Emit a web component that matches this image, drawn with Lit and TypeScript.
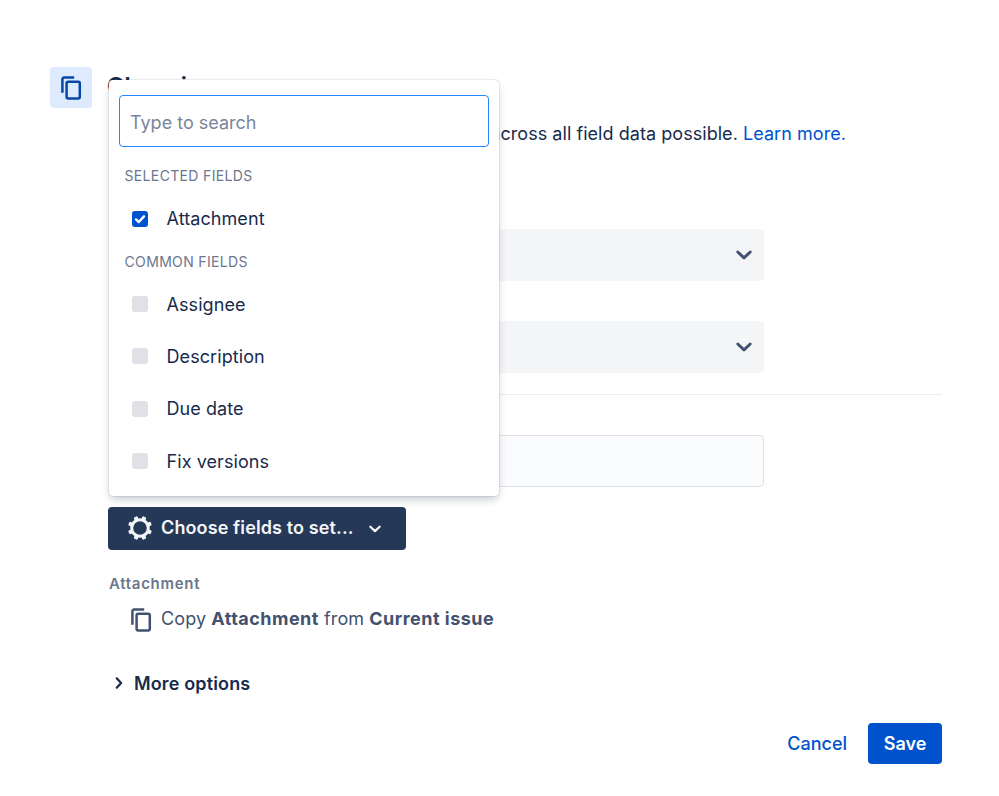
import { LitElement, html, css, svg } from 'lit';
import { customElement, property, state } from 'lit/decorators.js';
import { classMap } from 'lit/directives/class-map.js';

interface Field {
  name: string;
  checked: boolean;
}

interface FieldGroup {
  title: string;
  fields: Field[];
}

const icons: Record<string, unknown> = {
  copy: svg`
    <path d="M1.4 16.8V3.2a1.6 1.6 0 0 1 1.6-1.6h10.2" fill="none" stroke="currentColor" stroke-width="2.5"/>
    <rect x="5.6" y="5.8" width="13.2" height="16.6" rx="1.6" fill="none" stroke="currentColor" stroke-width="2.5"/>`,
  chevron: svg`<path d="M5.8 9 12 14.8 18.2 9" fill="none" stroke="currentColor" stroke-width="3" stroke-linecap="round" stroke-linejoin="round"/>`,
  gear: svg`
    <circle cx="12" cy="12" r="8.3" fill="none" stroke="currentColor" stroke-width="3"/>
    ${[22.5, 67.5, 112.5, 157.5, 202.5, 247.5, 292.5, 337.5].map(a => svg`
      <rect x="9.9" y="-0.1" width="4.2" height="4.5" rx="1.3" fill="currentColor" transform="rotate(${a} 12 12)"/>
    `)}`,
  check: svg`<path d="M6 12.6 10.2 16.6 18 8" fill="none" stroke="currentColor" stroke-width="3.6" stroke-linecap="round" stroke-linejoin="round"/>`,
  info: svg`<circle cx="12" cy="12" r="10.5" fill="currentColor"/>`,
};

@customElement('form-icon')
export class FormIcon extends LitElement {
  static styles = css`
    :host {
      display: block;
      width: 24px;
      height: 24px;
      flex: none;
    }

    svg {
      display: block;
      width: 100%;
      height: 100%;
      overflow: visible;
    }
  `;

  @property() name = '';

  render() {
    return html`<svg viewBox="0 0 24 24">${icons[this.name]}</svg>`;
  }
}

@customElement('field-picker')
export class FieldPicker extends LitElement {
  static styles = css`
    :host {
      display: block;
      box-sizing: border-box;
      width: 390.5px;
      padding: 15px 10px 8px 10.5px;
      background: #fff;
      border-radius: 4px;
      box-shadow: 0 5px 10px -2px rgba(9, 30, 66, 0.25), 0 0 1.5px rgba(9, 30, 66, 0.35);
    }

    .search {
      display: block;
      box-sizing: border-box;
      width: 370px;
      height: 52px;
      margin-bottom: 12px;
      padding: 2px 10px 0;
      border: 1.4px solid #2684ff;
      border-radius: 4px;
      outline: none;
      background: #fff;
      font: 18px Inter, sans-serif;
      color: #172b4d;
    }

    .search::placeholder {
      color: #7a869a;
      opacity: 1;
    }

    .heading {
      padding-left: 5.5px;
      font-size: 14px;
      line-height: 34px;
      letter-spacing: 0.35px;
      color: #6b778c;
    }

    .row {
      display: flex;
      align-items: center;
      gap: 18.5px;
      height: 52.5px;
      padding-left: 13px;
      font-size: 18px;
      letter-spacing: 0.08px;
      color: #172b4d;
    }

    .heading + .row {
      height: 51.5px;
    }

    .box {
      width: 16px;
      height: 16px;
      border-radius: 3px;
      background: #dfe1e6;
    }

    .box.checked {
      background: #0052cc;
      color: #fff;
    }

    .box form-icon {
      width: 16px;
      height: 16px;
    }
  `;

  @state() groups: FieldGroup[] = [
    { title: 'SELECTED FIELDS', fields: [{ name: 'Attachment', checked: true }] },
    {
      title: 'COMMON FIELDS',
      fields: [
        { name: 'Assignee', checked: false },
        { name: 'Description', checked: false },
        { name: 'Due date', checked: false },
        { name: 'Fix versions', checked: false },
      ],
    },
  ];

  render() {
    return html`
      <input class="search" placeholder="Type to search">
      ${this.groups.map(g => html`
        <div class="heading">${g.title}</div>
        ${g.fields.map(f => html`
          <div class="row" @click="${() => this.toggle(f)}">
            <div class=${classMap({ box: true, checked: f.checked })}>
              ${f.checked ? html`<form-icon name="check"></form-icon>` : ''}
            </div>
            <span>${f.name}</span>
          </div>
        `)}
      `)}
    `;
  }

  toggle(field: Field) {
    field.checked = !field.checked;
    this.requestUpdate();
  }
}

@customElement('app-root')
export class AppRoot extends LitElement {
  static styles = css`
    :host {
      display: flex;
      gap: 17px;
      box-sizing: border-box;
      width: 999px;
      height: 796px;
      padding: 67px 57px 0 50px;
      overflow: hidden;
      background: #fff;
      font-family: Inter, sans-serif;
      font-size: 18px;
      color: #172b4d;
    }

    .tile {
      display: flex;
      align-items: center;
      justify-content: center;
      box-sizing: border-box;
      flex: none;
      width: 42px;
      height: 41px;
      padding-left: 4px;
      border-radius: 4px;
      background: #deebff;
      color: #0747a6;
    }

    .content {
      flex: 1;
      min-width: 0;
    }

    .title {
      display: flex;
      align-items: center;
      gap: 17px;
      box-sizing: border-box;
      height: 41px;
      margin-left: -2px;
      padding-bottom: 4px;
      font-size: 23.5px;
      font-weight: 600;
      letter-spacing: 0.3px;
    }

    .title form-icon {
      width: 17px;
      height: 17px;
      margin-top: 4px;
      color: #6b778c;
    }

    .intro {
      width: 737px;
      margin: 14px 0 84px;
      line-height: 23px;
      letter-spacing: 0.05px;
      text-align: right;
      white-space: nowrap;
    }

    .link {
      color: #0052cc;
    }

    .select {
      display: flex;
      align-items: center;
      justify-content: flex-end;
      box-sizing: border-box;
      width: 655px;
      height: 52px;
      margin-bottom: 40px;
      padding-right: 8px;
      border-radius: 4px;
      background: #f4f5f7;
      color: #42526e;
    }

    .rule {
      height: 1px;
      margin: -19px 0 40px;
      background: #ebecf0;
    }

    .summary {
      display: block;
      box-sizing: border-box;
      width: 655px;
      height: 52px;
      border: 1.4px solid #dfe1e6;
      border-radius: 4px;
      background: #fafbfc;
    }

    .anchor {
      position: relative;
      width: 297.5px;
      margin: 20px 0 0 -1px;
    }

    .anchor field-picker {
      position: absolute;
      left: 0.5px;
      bottom: calc(100% + 11.5px);
    }

    .choose {
      display: flex;
      align-items: center;
      height: 42.5px;
      padding-left: 20px;
      border-radius: 4px;
      background: #253858;
      font-weight: 600;
      letter-spacing: 0.12px;
      color: #f4f5f7;
    }

    .choose span {
      margin: 0 12px 2px 9px;
    }

    .choose .arrow {
      width: 18px;
      height: 18px;
      margin-top: 2px;
    }

    .label {
      margin-top: 24.5px;
      font-size: 15px;
      font-weight: 600;
      line-height: 20px;
      letter-spacing: 0.7px;
      color: #6b778c;
    }

    .action {
      display: flex;
      align-items: center;
      gap: 6.5px;
      height: 24px;
      margin-top: 14px;
      padding-left: 21.5px;
      color: #42526e;
    }

    .action div {
      margin-bottom: 3px;
      letter-spacing: 0.1px;
    }

    .action b {
      font-weight: 700;
      letter-spacing: 0.48px;
    }

    .more {
      display: flex;
      align-items: center;
      gap: 6px;
      height: 24px;
      margin-top: 39px;
      font-weight: 600;
      letter-spacing: 0.15px;
    }

    .more form-icon {
      width: 18px;
      height: 18px;
      margin-left: 1px;
      transform: rotate(-90deg);
    }

    .footer {
      display: flex;
      align-items: center;
      justify-content: flex-end;
      gap: 21px;
      margin-top: 28px;
      font-weight: 500;
      color: #0052cc;
    }

    .save {
      width: 74px;
      border-radius: 4px;
      background: #0052cc;
      font-weight: 600;
      line-height: 41px;
      text-align: center;
      color: #fff;
    }
  `;

  render() {
    return html`
      <div class="tile"><form-icon name="copy"></form-icon></div>
      <div class="content">
        <div class="title">Clone issue <form-icon name="info"></form-icon></div>
        <div class="intro">across all field data possible. <span class="link">Learn more.</span></div>

        <div class="select"><form-icon name="chevron"></form-icon></div>
        <div class="select"><form-icon name="chevron"></form-icon></div>
        <div class="rule"></div>
        <input class="summary">

        <div class="anchor">
          <div class="choose">
            <form-icon name="gear"></form-icon>
            <span>Choose fields to set...</span>
            <form-icon class="arrow" name="chevron"></form-icon>
          </div>
          <field-picker></field-picker>
        </div>

        <div class="label">Attachment</div>
        <div class="action">
          <form-icon name="copy"></form-icon>
          <div>Copy <b>Attachment</b> from <b>Current issue</b></div>
        </div>

        <div class="more"><form-icon name="chevron"></form-icon>More options</div>

        <div class="footer">
          <div>Cancel</div>
          <div class="save">Save</div>
        </div>
      </div>
    `;
  }
}
